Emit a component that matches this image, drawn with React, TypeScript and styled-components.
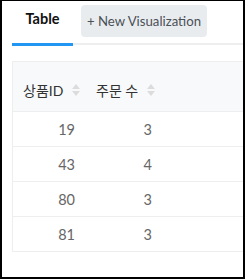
import React from "react";
import styled, { createGlobalStyle } from "styled-components";

const GlobalStyle = createGlobalStyle`
  html, body {
    margin: 0;
    padding: 0;
    background: #fff;
  }
  body {
    font-family: Lato, "Noto Sans CJK KR", sans-serif;
    font-size: 14px;
  }
`;

const Frame = styled.div`
  box-sizing: border-box;
  width: 245px;
  height: 279px;
  border: 2px solid #000;
  border-top-width: 1px;
  padding-left: 10px;
  overflow: hidden;
  background: #fff;
`;

const TabBar = styled.div`
  display: flex;
  align-items: flex-start;
  height: 42px;
  border-bottom: 2px solid #eeeeee;
  margin-right: -2px;
`;

const Tab = styled.div<{ $active?: boolean }>`
  box-sizing: border-box;
  width: 61px;
  height: 45px;
  display: flex;
  align-items: center;
  justify-content: center;
  padding-bottom: 7px;
  font-size: 14.5px;
  font-weight: 700;
  color: #111;
  border-bottom: ${p => (p.$active ? "3px solid #2196f3" : "none")};
`;

const AddButton = styled.button`
  margin: 4px 0 0 8px;
  height: 32px;
  width: 126px;
  padding: 0;
  border: none;
  border-radius: 4px;
  background: #e9ecef;
  color: #495057;
  font-family: inherit;
  font-size: 13.2px;
  white-space: nowrap;
`;

const Table = styled.div`
  margin-top: 16px;
  width: 260px;
  border: 1px solid #eeeeee;
  border-right: none;
`;

const HeadRow = styled.div`
  display: grid;
  grid-template-columns: 73px 77px 1fr;
  height: 49px;
  background: #f8f9fb;
  border-bottom: 1px solid #eeeeee;
  align-items: center;
`;

const HeadCell = styled.div`
  display: flex;
  align-items: center;
  gap: 9px;
  padding-left: 10px;
  padding-top: 6px;
  color: #333;
  font-size: 14px;
`;

const BodyRow = styled.div`
  display: grid;
  grid-template-columns: 73px 77px 1fr;
  height: 34px;
  align-items: center;
  border-bottom: 1px solid #eeeeee;
  &:last-child {
    border-bottom: none;
  }
`;

const Cell = styled.div<{ $pad: number }>`
  text-align: right;
  padding-right: ${p => p.$pad}px;
  color: #666;
  font-size: 14.5px;
`;

function SortIcon() {
  return (
    <svg width="8" height="12" viewBox="0 0 8 12">
      <path d="M4 0 L8 5 L0 5 Z" fill="#dcdcdc" />
      <path d="M4 12 L8 7 L0 7 Z" fill="#dcdcdc" />
    </svg>
  );
}

const rows = [
  { id: 19, count: 3 },
  { id: 43, count: 4 },
  { id: 80, count: 3 },
  { id: 81, count: 3 }
];

export default function App() {
  return (
    <>
      <GlobalStyle />
      <Frame>
        <TabBar>
          <Tab $active>Table</Tab>
          <AddButton>+ New Visualization</AddButton>
        </TabBar>
        <Table>
          <HeadRow>
            <HeadCell>
              상품ID <SortIcon />
            </HeadCell>
            <HeadCell>
              주문 수 <SortIcon />
            </HeadCell>
            <div />
          </HeadRow>
          {rows.map(r => (
            <BodyRow key={r.id}>
              <Cell $pad={11}>{r.id}</Cell>
              <Cell $pad={11}>{r.count}</Cell>
              <div />
            </BodyRow>
          ))}
        </Table>
      </Frame>
    </>
  );
}
